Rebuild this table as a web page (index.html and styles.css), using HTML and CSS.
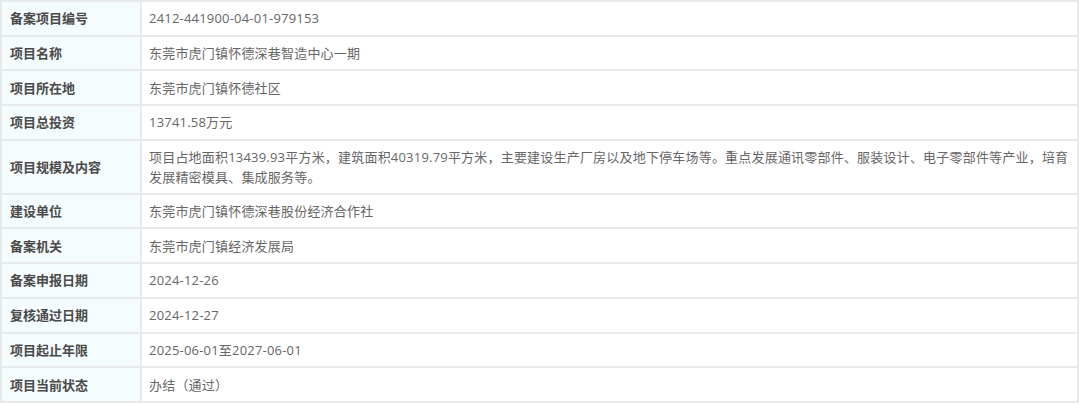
FILE: index.html
```html
<!DOCTYPE html>
<html lang="zh-CN">
<head>
<meta charset="utf-8">
<title>备案项目信息</title>
<link rel="stylesheet" href="styles.css">
</head>
<body>
<table class="info">
  <tbody>
    <tr><th>备案项目编号</th><td>2412-441900-04-01-979153</td></tr>
    <tr><th>项目名称</th><td>东莞市虎门镇怀德深巷智造中心一期</td></tr>
    <tr><th>项目所在地</th><td>东莞市虎门镇怀德社区</td></tr>
    <tr><th>项目总投资</th><td>13741.58万元</td></tr>
    <tr class="tall"><th>项目规模及内容</th><td>项目占地面积13439.93平方米，建筑面积40319.79平方米，主要建设生产厂房以及地下停车场等。重点发展通讯零部件、服装设计、电子零部件等产业，培育发展精密模具、集成服务等。</td></tr>
    <tr><th>建设单位</th><td>东莞市虎门镇怀德深巷股份经济合作社</td></tr>
    <tr><th>备案机关</th><td>东莞市虎门镇经济发展局</td></tr>
    <tr><th>备案申报日期</th><td>2024-12-26</td></tr>
    <tr><th>复核通过日期</th><td>2024-12-27</td></tr>
    <tr><th>项目起止年限</th><td>2025-06-01至2027-06-01</td></tr>
    <tr><th>项目当前状态</th><td>办结（通过）</td></tr>
  </tbody>
</table>
</body>
</html>
```

FILE: styles.css
```css
html, body {
  margin: 0;
  padding: 0;
  background: #ffffff;
}
body {
  font-family: "Noto Sans CJK SC", "Noto Sans", sans-serif;
  font-size: 13px;
}
.info {
  width: 1079px;
  border-collapse: collapse;
  table-layout: fixed;
  margin-top: 0;
}
.info th, .info td {
  border: 2px solid #e8e9e9;
  height: 32.7px;
  padding: 0 8px;
  vertical-align: middle;
  line-height: 20px;
}
.info th {
  width: 122px;
  background: #f5fcfd;
  color: #4a4a4a;
  font-weight: bold;
  text-align: left;
}
.info td {
  font-family: "Open Sans", "Noto Sans CJK SC", sans-serif;
  letter-spacing: 0.2px;
  color: #666666;
  padding-left: 7px;
}
.info tr.tall td, .info tr.tall th {
  height: 52px;
}
```
